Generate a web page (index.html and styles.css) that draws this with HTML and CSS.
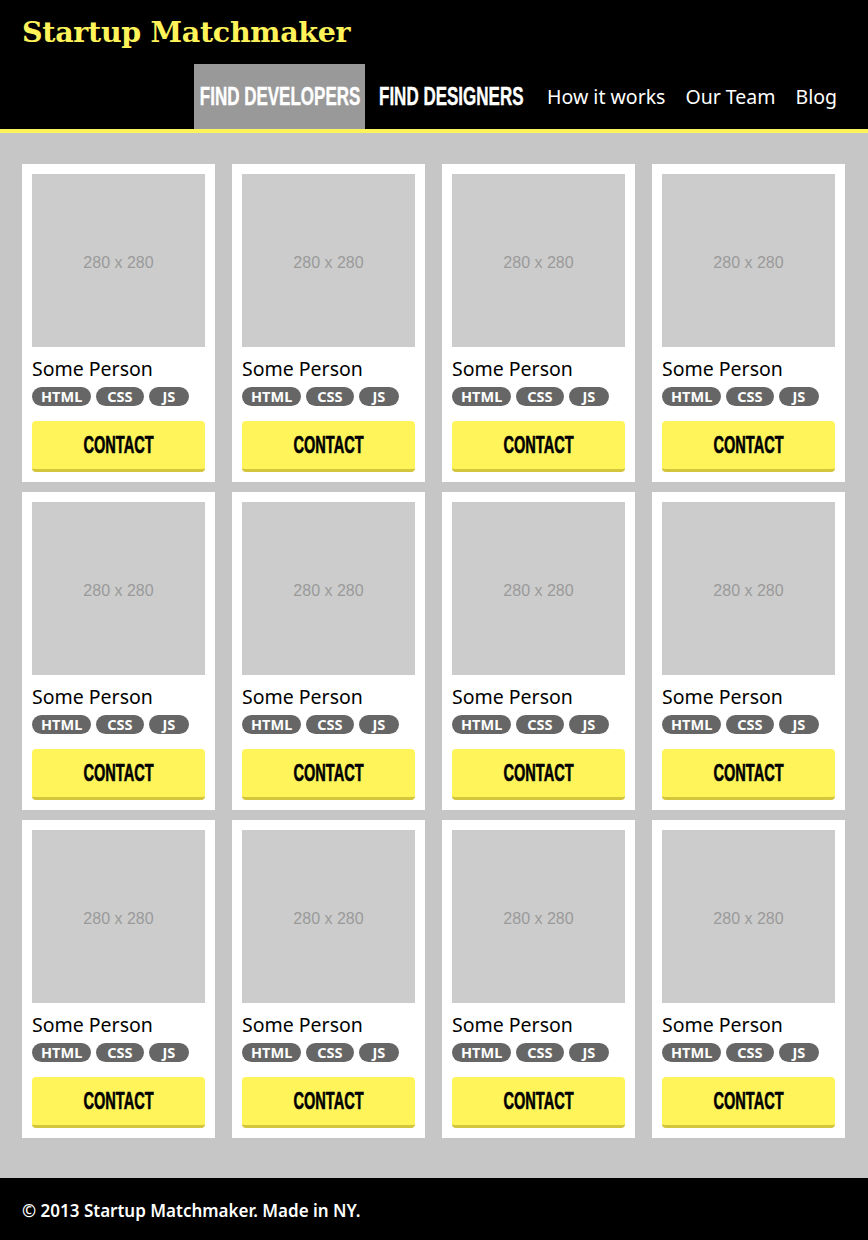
FILE: index.html
```html
<!DOCTYPE html>
<html>
<head>
<meta charset="utf-8">
<title>Startup Matchmaker</title>
<link rel="stylesheet" href="styles.css">
</head>
<body>
<header class="site-header">
  <h1 class="logo">Startup Matchmaker</h1>
  <nav class="nav">
    <a class="nav-item nav-strong nav-dev active" href="#"><span class="narrow">FIND DEVELOPERS</span></a>
    <a class="nav-item nav-strong nav-des" href="#"><span class="narrow">FIND DESIGNERS</span></a>
    <a class="nav-item" href="#">How it works</a>
    <a class="nav-item" href="#">Our Team</a>
    <a class="nav-item" href="#">Blog</a>
  </nav>
</header>
<main class="grid">
  <div class="card"><div class="photo">280 x 280</div><div class="name">Some Person</div><div class="tags"><span class="tag tag-html">HTML</span><span class="tag tag-css">CSS</span><span class="tag tag-js">JS</span></div><a class="contact" href="#"><span class="narrow">CONTACT</span></a></div>
  <div class="card"><div class="photo">280 x 280</div><div class="name">Some Person</div><div class="tags"><span class="tag tag-html">HTML</span><span class="tag tag-css">CSS</span><span class="tag tag-js">JS</span></div><a class="contact" href="#"><span class="narrow">CONTACT</span></a></div>
  <div class="card"><div class="photo">280 x 280</div><div class="name">Some Person</div><div class="tags"><span class="tag tag-html">HTML</span><span class="tag tag-css">CSS</span><span class="tag tag-js">JS</span></div><a class="contact" href="#"><span class="narrow">CONTACT</span></a></div>
  <div class="card"><div class="photo">280 x 280</div><div class="name">Some Person</div><div class="tags"><span class="tag tag-html">HTML</span><span class="tag tag-css">CSS</span><span class="tag tag-js">JS</span></div><a class="contact" href="#"><span class="narrow">CONTACT</span></a></div>
  <div class="card"><div class="photo">280 x 280</div><div class="name">Some Person</div><div class="tags"><span class="tag tag-html">HTML</span><span class="tag tag-css">CSS</span><span class="tag tag-js">JS</span></div><a class="contact" href="#"><span class="narrow">CONTACT</span></a></div>
  <div class="card"><div class="photo">280 x 280</div><div class="name">Some Person</div><div class="tags"><span class="tag tag-html">HTML</span><span class="tag tag-css">CSS</span><span class="tag tag-js">JS</span></div><a class="contact" href="#"><span class="narrow">CONTACT</span></a></div>
  <div class="card"><div class="photo">280 x 280</div><div class="name">Some Person</div><div class="tags"><span class="tag tag-html">HTML</span><span class="tag tag-css">CSS</span><span class="tag tag-js">JS</span></div><a class="contact" href="#"><span class="narrow">CONTACT</span></a></div>
  <div class="card"><div class="photo">280 x 280</div><div class="name">Some Person</div><div class="tags"><span class="tag tag-html">HTML</span><span class="tag tag-css">CSS</span><span class="tag tag-js">JS</span></div><a class="contact" href="#"><span class="narrow">CONTACT</span></a></div>
  <div class="card"><div class="photo">280 x 280</div><div class="name">Some Person</div><div class="tags"><span class="tag tag-html">HTML</span><span class="tag tag-css">CSS</span><span class="tag tag-js">JS</span></div><a class="contact" href="#"><span class="narrow">CONTACT</span></a></div>
  <div class="card"><div class="photo">280 x 280</div><div class="name">Some Person</div><div class="tags"><span class="tag tag-html">HTML</span><span class="tag tag-css">CSS</span><span class="tag tag-js">JS</span></div><a class="contact" href="#"><span class="narrow">CONTACT</span></a></div>
  <div class="card"><div class="photo">280 x 280</div><div class="name">Some Person</div><div class="tags"><span class="tag tag-html">HTML</span><span class="tag tag-css">CSS</span><span class="tag tag-js">JS</span></div><a class="contact" href="#"><span class="narrow">CONTACT</span></a></div>
  <div class="card"><div class="photo">280 x 280</div><div class="name">Some Person</div><div class="tags"><span class="tag tag-html">HTML</span><span class="tag tag-css">CSS</span><span class="tag tag-js">JS</span></div><a class="contact" href="#"><span class="narrow">CONTACT</span></a></div>
</main>
<footer class="site-footer">© 2013 Startup Matchmaker. Made in NY.</footer>
</body>
</html>
```

FILE: styles.css
```css
* { box-sizing: border-box; }
html, body { margin: 0; padding: 0; }
body {
  background: #c6c6c6;
  font-family: "Noto Sans", "Open Sans", sans-serif;
  color: #000;
}
.site-header {
  background: #000;
  height: 133px;
  border-bottom: 4px solid #fff35a;
  display: flex;
  flex-direction: column;
  justify-content: space-between;
}
.logo {
  margin: 0;
  padding: 12px 0 0 22px;
  font-family: "DejaVu Serif", "Liberation Serif", serif;
  font-weight: bold;
  font-size: 28.5px;
  line-height: 40px;
  color: #fff35a;
  letter-spacing: -0.3px;
}
.nav {
  display: flex;
  justify-content: flex-end;
  align-items: stretch;
  height: 65px;
  padding-right: 21px;
  gap: 0;
}
.nav-item {
  display: flex;
  align-items: center;
  padding: 0 10px;
  color: #fff;
  text-decoration: none;
  font-size: 19.5px;
}
.nav-strong {
  justify-content: center;
  padding: 0;
  font-family: "Liberation Sans", Arial, sans-serif;
  font-weight: bold;
  font-size: 25px;
}
.nav-dev { width: 171px; }
.nav-des { width: 172px; }
.narrow {
  display: inline-block;
  white-space: nowrap;
  transform: scaleX(0.68);
  transform-origin: center;
  -webkit-text-stroke: 0.4px currentColor;
}
.nav-item.active { background: #999; }
.grid {
  display: grid;
  grid-template-columns: repeat(4, 193px);
  column-gap: 17px;
  row-gap: 10px;
  padding: 31px 22px 40px;
}
.card {
  background: #fff;
  padding: 10px;
  display: flex;
  flex-direction: column;
}
.photo {
  width: 173px;
  height: 173px;
  padding-top: 5px;
  background: #ccc;
  color: #9a9a9a;
  font-family: "Liberation Sans", Arial, sans-serif;
  font-size: 16px;
  display: flex;
  align-items: center;
  justify-content: center;
}
.name {
  margin-top: 10px;
  font-size: 19.5px;
  line-height: 24px;
}
.tags {
  display: flex;
  gap: 5px;
  margin-top: 6px;
}
.tag {
  background: #666;
  color: #fff;
  font-weight: bold;
  font-size: 14.5px;
  line-height: 19px;
  padding: 0 9px;
  border-radius: 10px;
}
.tag-css { padding: 0 11px; }
.tag-js { padding: 0 14px; }
.contact {
  margin-top: 15px;
  height: 51px;
  background: #fff55a;
  border-bottom: 3px solid #d4c63c;
  border-radius: 4px;
  display: flex;
  align-items: center;
  justify-content: center;
  color: #000;
  text-decoration: none;
  font-family: "Liberation Sans", Arial, sans-serif;
  font-weight: bold;
  font-size: 23.5px;
}
.contact .narrow { transform: scaleX(0.62); -webkit-text-stroke: 0.6px currentColor; }
.site-footer {
  background: #000;
  color: #fff;
  height: 63px;
  padding: 2px 22px 0;
  display: flex;
  align-items: center;
  font-size: 17px;
  font-weight: 600;
}
```
